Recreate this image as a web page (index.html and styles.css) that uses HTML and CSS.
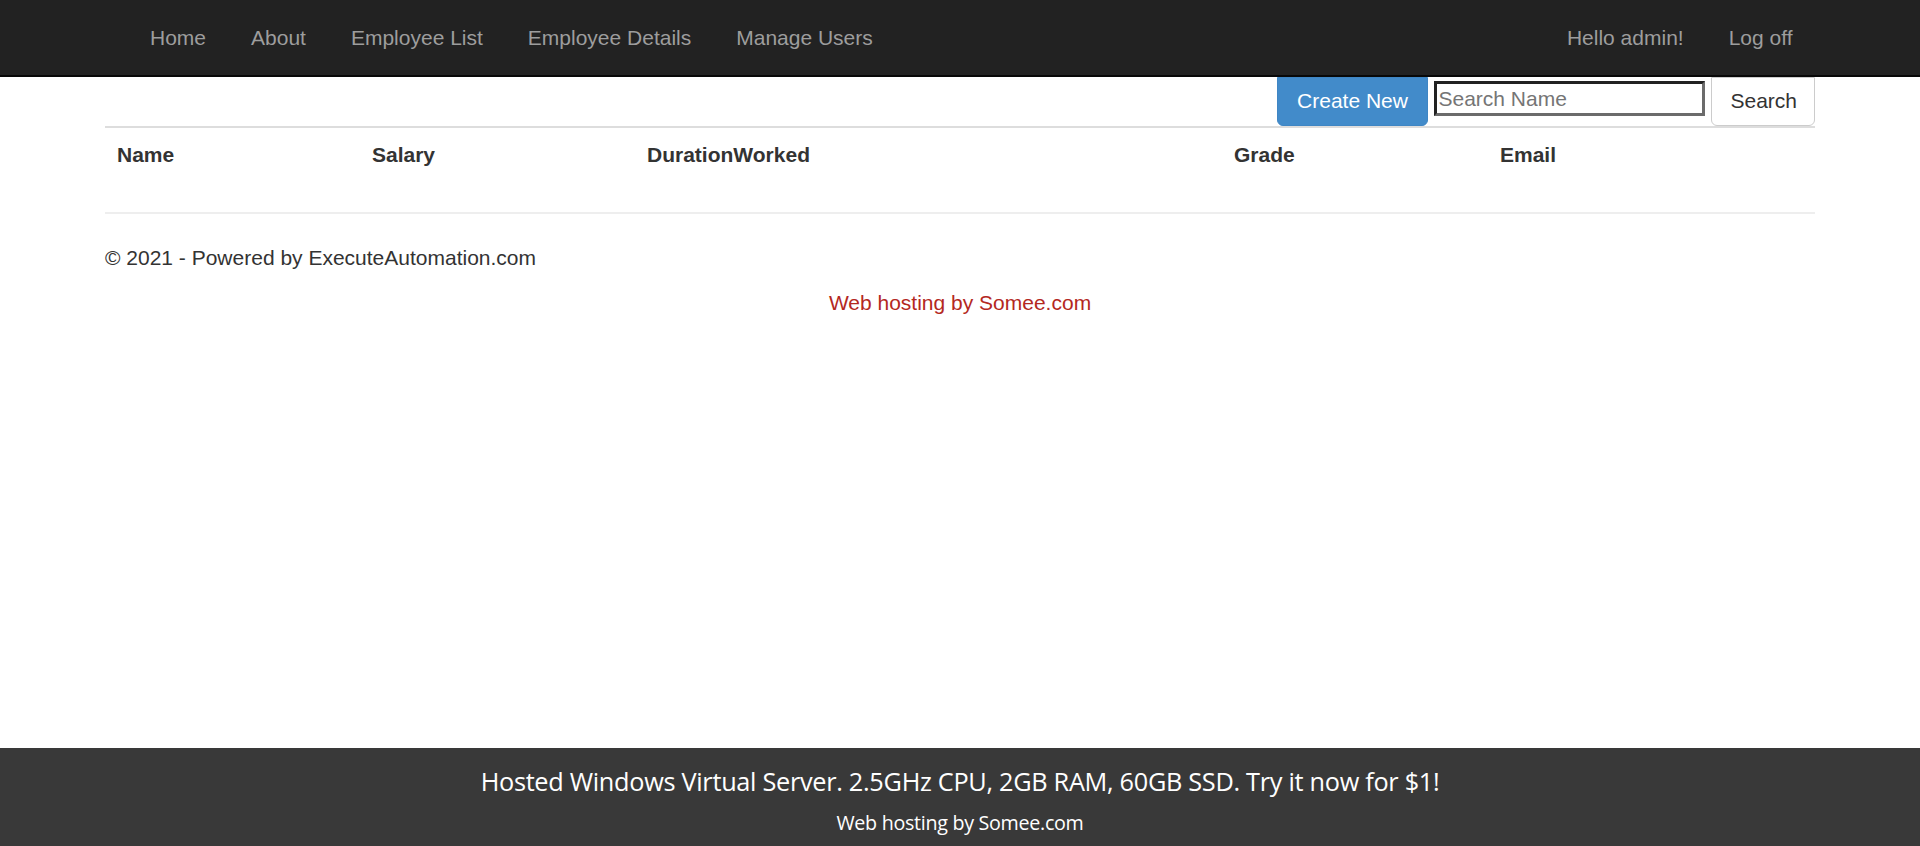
FILE: index.html
```html
<!DOCTYPE html>
<html lang="en">
<head>
<meta charset="utf-8">
<title>Employee List</title>
<link rel="stylesheet" href="styles.css">
</head>
<body>
<div class="page">
  <header class="navbar">
    <div class="nav-container">
      <ul class="nav">
        <li><a href="#">Home</a></li>
        <li><a href="#">About</a></li>
        <li><a href="#">Employee List</a></li>
        <li><a href="#">Employee Details</a></li>
        <li><a href="#">Manage Users</a></li>
      </ul>
      <ul class="nav">
        <li><a href="#">Hello admin!</a></li>
        <li><a href="#">Log off</a></li>
      </ul>
    </div>
  </header>

  <main class="container">
    <div class="toolbar">
      <a class="btn btn-primary" href="#">Create New</a>
      <input class="search-input" type="text" placeholder="Search Name">
      <button class="btn btn-default" type="button">Search</button>
    </div>
    <table class="table">
      <colgroup>
        <col class="c1"><col class="c2"><col class="c3"><col class="c4"><col class="c5">
      </colgroup>
      <tr>
        <th>Name</th>
        <th>Salary</th>
        <th>DurationWorked</th>
        <th>Grade</th>
        <th>Email</th>
      </tr>
    </table>
    <hr class="rule">
    <footer class="site-footer">
      <p>&copy; 2021 - Powered by ExecuteAutomation.com</p>
    </footer>
    <div class="host-link"><a href="#">Web hosting by Somee.com</a></div>
  </main>

  <div class="ad-band">
    <div class="ad-main">Hosted Windows Virtual Server. 2.5GHz CPU, 2GB RAM, 60GB SSD. Try it now for $1!</div>
    <div class="ad-sub">Web hosting by Somee.com</div>
  </div>
</div>
</body>
</html>
```

FILE: styles.css
```css
* { box-sizing: border-box; }

html, body {
  margin: 0;
  padding: 0;
}

body {
  font-family: "Liberation Sans", Arial, Helvetica, sans-serif;
  font-size: 21px;
  line-height: 30px;
  color: #333333;
  background: #ffffff;
}

.page {
  min-height: 100vh;
  display: flex;
  flex-direction: column;
}

/* navbar */
.navbar {
  background: #222222;
  border-bottom: 2px solid #080808;
  height: 77px;
}

.nav-container {
  width: 1755px;
  margin: 0 auto;
  padding: 0 22.5px 0 45px;
  display: flex;
  justify-content: space-between;
}

.nav {
  list-style: none;
  margin: 0;
  padding: 0;
  display: flex;
}

.nav a {
  display: block;
  padding: 0 22.5px;
  line-height: 75px;
  color: #9d9d9d;
  text-decoration: none;
}

/* main */
.container {
  width: 1755px;
  margin: 0 auto;
  padding: 0 22.5px;
}

.toolbar {
  display: flex;
  justify-content: flex-end;
  align-items: flex-start;
  gap: 6px;
  height: 49px;
}

.btn {
  display: inline-flex;
  align-items: center;
  height: 49px;
  padding: 0 18px 2px;
  font-family: inherit;
  font-size: 21px;
  line-height: 30px;
  border: 1.5px solid transparent;
  border-radius: 0 0 6px 6px;
  text-decoration: none;
  cursor: pointer;
}

.btn-primary {
  background: #428bca;
  border-color: #3f86c4;
  color: #ffffff;
  padding: 0 19.5px 2px;
}

.btn-default {
  background: #ffffff;
  border-color: #cccccc;
  color: #333333;
  padding: 0 17px 2px 18px;
}

.search-input {
  margin-top: 4px;
  width: 271px;
  height: 35px;
  padding: 0 1px;
  font-family: inherit;
  font-size: 21px;
  line-height: 28px;
  color: #333333;
  border-style: solid;
  border-width: 3px;
  border-color: #222222 #6b6b6b #6b6b6b #222222;
  background: #ffffff;
  outline: none;
}

.search-input::placeholder {
  color: #757575;
}

.table {
  width: 100%;
  border-collapse: collapse;
  margin: 0 0 30px;
}

.table col.c1 { width: 255px; }
.table col.c2 { width: 275px; }
.table col.c3 { width: 587px; }
.table col.c4 { width: 266px; }
.table col.c5 { width: 327px; }

.table th {
  text-align: left;
  font-weight: bold;
  padding: 12px;
  line-height: 30px;
  border-top: 2px solid #dddddd;
  vertical-align: bottom;
}

.rule {
  margin: 0 0 29px;
  border: 0;
  border-top: 2px solid #eeeeee;
  height: 0;
}

.site-footer p {
  margin: 0 0 15px;
}

.host-link {
  text-align: center;
}

.host-link a {
  color: #b4281e;
  text-decoration: none;
}

/* ad band */
.ad-band {
  margin-top: auto;
  background: #393939;
  color: #ffffff;
  font-family: "Open Sans", "Noto Sans", sans-serif;
  text-align: center;
  height: 98px;
  padding-top: 15px;
}

.ad-main {
  font-size: 25.3px;
  line-height: 36px;
  letter-spacing: -0.3px;
}

.ad-sub {
  margin-top: 10px;
  font-size: 19.7px;
  line-height: 28px;
  letter-spacing: -0.3px;
}
```
